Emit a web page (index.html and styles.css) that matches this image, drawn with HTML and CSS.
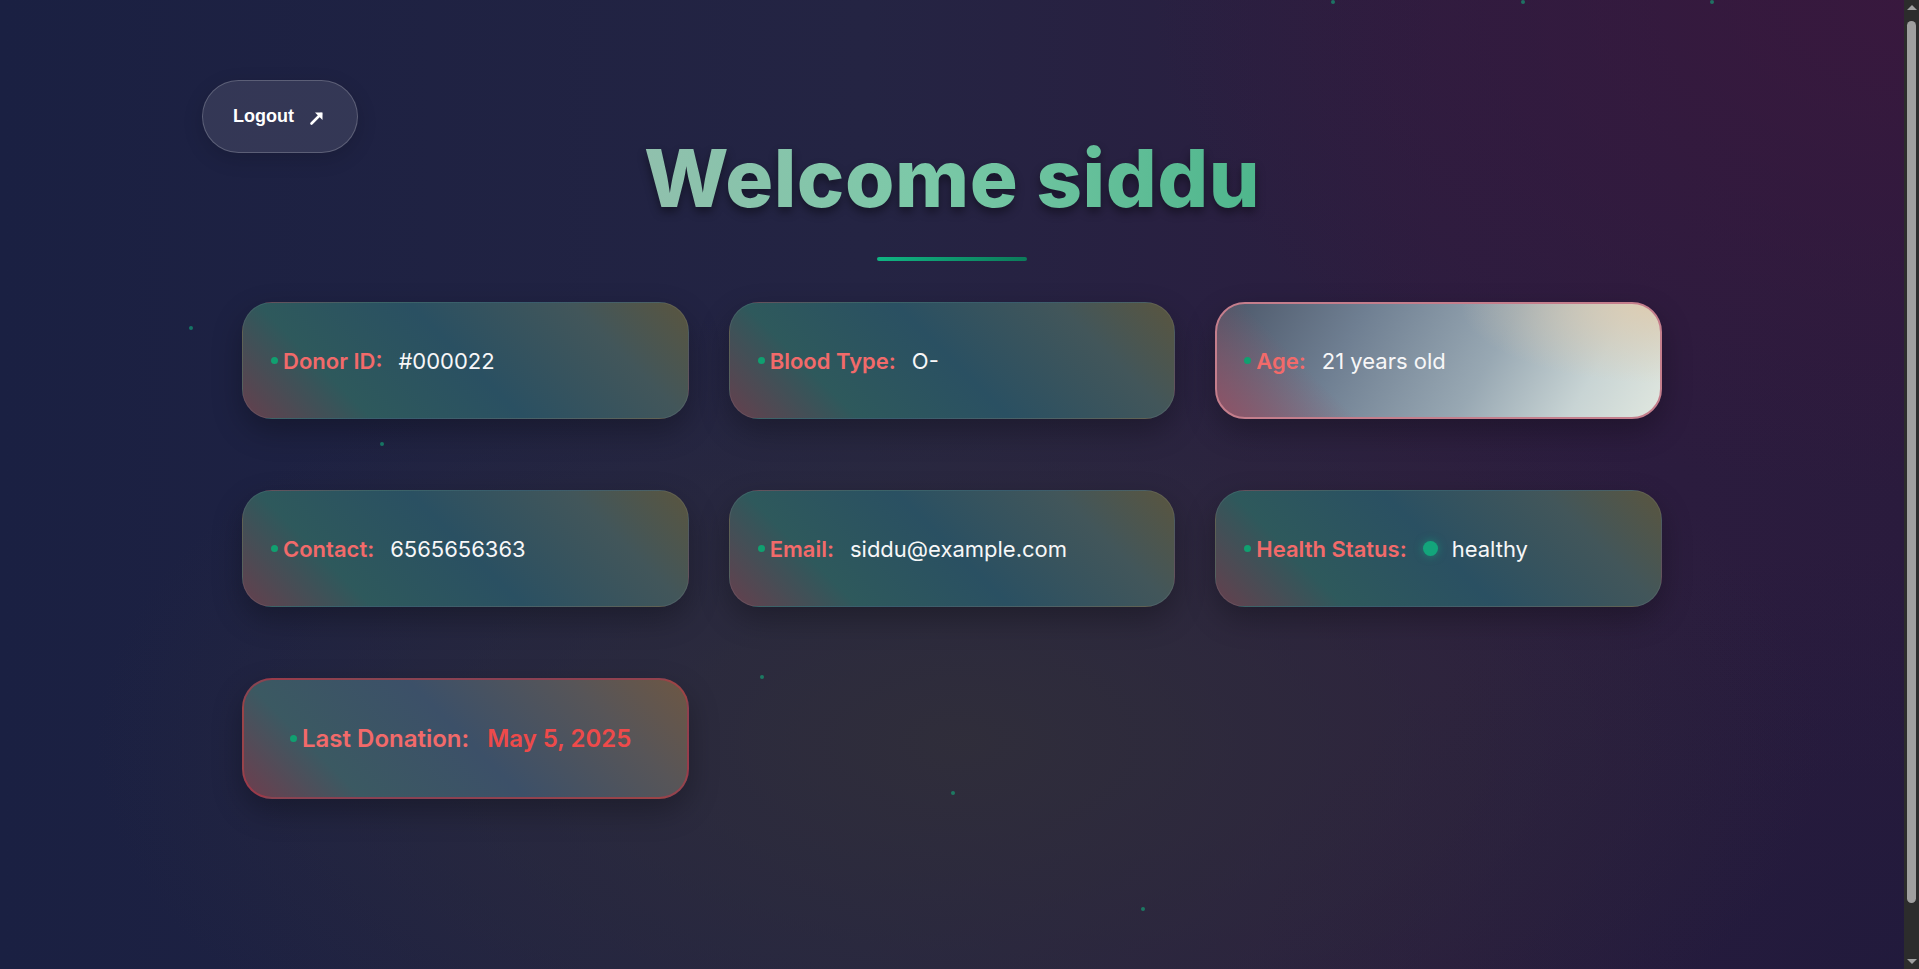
FILE: index.html
```html
<!DOCTYPE html>
<html lang="en">
<head>
<meta charset="utf-8">
<title>Donor Dashboard</title>
<link rel="stylesheet" href="styles.css">
</head>
<body>
  <div class="particles" aria-hidden="true">
    <span class="particle p1"></span>
    <span class="particle p2"></span>
    <span class="particle p3"></span>
    <span class="particle p4"></span>
    <span class="particle p5"></span>
    <span class="particle p6"></span>
    <span class="particle p7"></span>
    <span class="particle p8"></span>
  </div>
  <div class="page">
    <main class="container">
      <header class="top">
        <button class="logout" type="button">
          <span>Logout</span>
          <svg class="logout-icon" width="16" height="16" viewBox="0 0 16 16" aria-hidden="true">
            <path d="M2.5 13.5 L12 4" stroke="#fff" stroke-width="2.6" stroke-linecap="round" fill="none"/>
            <path d="M6 2.5 H13.5 V10 Z" fill="#fff"/>
          </svg>
        </button>
        <div class="title-wrap">
          <h1 class="title">Welcome siddu</h1>
          <div class="underline"></div>
        </div>
        <div class="spacer"></div>
      </header>

      <section class="grid">
        <div class="card">
          <span class="label">Donor ID:</span>
          <span class="value">#000022</span>
        </div>
        <div class="card">
          <span class="label">Blood Type:</span>
          <span class="value">O-</span>
        </div>
        <div class="card card-active">
          <span class="label">Age:</span>
          <span class="value">21 years old</span>
        </div>
        <div class="card">
          <span class="label">Contact:</span>
          <span class="value">6565656363</span>
        </div>
        <div class="card">
          <span class="label">Email:</span>
          <span class="value">siddu@example.com</span>
        </div>
        <div class="card">
          <span class="label">Health Status:</span>
          <span class="status-dot"></span>
          <span class="value">healthy</span>
        </div>
        <div class="card card-donation">
          <span class="label">Last Donation:</span>
          <span class="value value-date">May 5, 2025</span>
        </div>
      </section>
    </main>
  </div>
  <div class="scrollbar" aria-hidden="true">
    <span class="sb-arrow sb-up"></span>
    <span class="sb-thumb"></span>
    <span class="sb-arrow sb-down"></span>
  </div>
</body>
</html>
```

FILE: styles.css
```css
:root {
  color-scheme: dark;
}

* {
  box-sizing: border-box;
}

html {
  background: #221f3c;
}

body {
  margin: 0;
  padding: 10px 15px 10px 0;
  position: relative;
  font-family: "Inter", "Noto Sans", sans-serif;
  color: #f5f5f7;
  background:
    radial-gradient(ellipse 45% 45% at 50% 75%, rgba(48, 46, 58, 0.95) 0%, rgba(48, 46, 58, 0) 100%),
    radial-gradient(ellipse 40% 50% at 100% 0%, rgba(58, 24, 62, 0.9) 0%, rgba(58, 24, 62, 0) 100%),
    radial-gradient(ellipse 35% 45% at 100% 100%, rgba(32, 26, 60, 0.9) 0%, rgba(32, 26, 60, 0) 100%),
    linear-gradient(90deg, #1a2042 0%, #242443 45%, #2c1d3f 75%, #2a1b3d 100%);
  min-height: 100vh;
}

.page {
  min-height: 100vh;
}

.particles {
  position: absolute;
  inset: 0;
  pointer-events: none;
  overflow: hidden;
}

.particle {
  position: absolute;
  width: 4px;
  height: 4px;
  border-radius: 50%;
  background: rgba(16, 185, 129, 0.55);
}

.p1 { left: 189px; top: 326px; }
.p2 { left: 380px; top: 442px; }
.p3 { left: 760px; top: 675px; }
.p4 { left: 951px; top: 791px; }
.p5 { left: 1141px; top: 907px; }
.p6 { left: 1331px; top: 0px; }
.p7 { left: 1521px; top: 0px; }
.p8 { left: 1710px; top: 0px; }

.container {
  width: 1500px;
  margin: 0 auto;
  padding-top: 70px;
}

.top {
  display: grid;
  grid-template-columns: 1fr auto 1fr;
  align-items: start;
}

.logout {
  justify-self: start;
  display: flex;
  align-items: center;
  gap: 15px;
  height: 73px;
  width: 156px;
  padding: 0 0 0 30px;
  border-radius: 37px;
  border: 1px solid rgba(255, 255, 255, 0.2);
  background: rgba(255, 255, 255, 0.1);
  color: #ffffff;
  font-family: "Liberation Sans", Arial, sans-serif;
  font-weight: 700;
  font-size: 18px;
  cursor: pointer;
  box-shadow: 0 6px 20px rgba(0, 0, 0, 0.15);
}

.logout-icon {
  display: block;
  margin-top: 2px;
}

.title-wrap {
  display: flex;
  flex-direction: column;
  align-items: center;
  margin-top: 49px;
}

.title {
  margin: 0;
  font-family: "Inter", sans-serif;
  font-weight: 800;
  font-size: 80px;
  letter-spacing: 0.5px;
  line-height: normal;
  background: linear-gradient(90deg, #90c0ad 0%, #7cc9a8 45%, #4eb68c 100%);
  -webkit-background-clip: text;
  background-clip: text;
  color: transparent;
  filter: drop-shadow(0 5px 5px rgba(0, 0, 0, 0.4));
}

.underline {
  width: 150px;
  height: 4px;
  margin-top: 31px;
  border-radius: 2px;
  background: linear-gradient(90deg, #10b583, #0c7b5a);
}

.grid {
  display: grid;
  grid-template-columns: repeat(3, 1fr);
  column-gap: 40px;
  row-gap: 71px;
  padding: 0 40px;
  margin-top: 41px;
}

.card {
  display: flex;
  align-items: center;
  min-height: 117px;
  padding: 0 28px;
  border-radius: 30px;
  border: 1px solid rgba(255, 255, 255, 0.07);
  background: linear-gradient(45deg, #653f4d 0%, #2e595c 23%, #2a5062 50%, #42565a 79%, #5a553f 100%);
  box-shadow: 0 12px 30px rgba(0, 0, 0, 0.28);
  font-size: 22px;
}

.label {
  display: flex;
  align-items: center;
  font-weight: 600;
  color: #f26a6a;
  margin-right: 16px;
  white-space: nowrap;
}

.label::before {
  content: "";
  width: 7px;
  height: 7px;
  border-radius: 50%;
  background: #10a070;
  margin-right: 5px;
  flex: none;
}

.value {
  font-weight: 400;
  color: #f7f7f8;
  white-space: nowrap;
}

.status-dot {
  width: 15px;
  height: 15px;
  border-radius: 50%;
  background: #13a57b;
  box-shadow: 0 0 8px rgba(16, 185, 129, 0.5);
  margin-right: 14px;
  flex: none;
}

.card-active {
  border: 2px solid #c47e8c;
  padding-left: 27px;
  background:
    radial-gradient(ellipse 45% 70% at 100% 0%, rgba(222, 204, 176, 0.95) 0%, rgba(222, 204, 176, 0) 100%),
    linear-gradient(45deg, rgba(150, 80, 100, 0.9) 0%, rgba(150, 80, 100, 0) 25%),
    linear-gradient(120deg, #4b5668 0%, #6f7f92 30%, #98a8b3 60%, #c8d4d4 82%, #e0e7df 100%);
}

.card-donation {
  min-height: 121px;
  padding-left: 46px;
  border: 2px solid rgba(190, 55, 70, 0.6);
  background: linear-gradient(45deg, #6e3d4d 0%, #3b5962 21%, #3c5068 50%, #575558 79%, #6d5744 100%);
}

.card-donation .label {
  font-size: 24px;
  margin-right: 18px;
}

.value-date {
  color: #ee4a4a;
  font-weight: 600;
  font-size: 24px;
}

.scrollbar {
  position: fixed;
  top: 0;
  right: 0;
  width: 15px;
  height: 100vh;
  background: #2c2c2c;
  display: flex;
  flex-direction: column;
  align-items: center;
}

.sb-arrow {
  flex: none;
  width: 0;
  height: 0;
  border-left: 5px solid transparent;
  border-right: 5px solid transparent;
}

.sb-up {
  margin-top: 5px;
  border-bottom: 5px solid #a0a0a0;
}

.sb-down {
  margin-bottom: 5px;
  border-top: 5px solid #a0a0a0;
}

.sb-thumb {
  flex: none;
  width: 9px;
  height: 882px;
  margin-top: 11px;
  border-radius: 5px;
  background: #9f9f9f;
}

.sb-thumb + .sb-arrow {
  margin-top: auto;
}
```
